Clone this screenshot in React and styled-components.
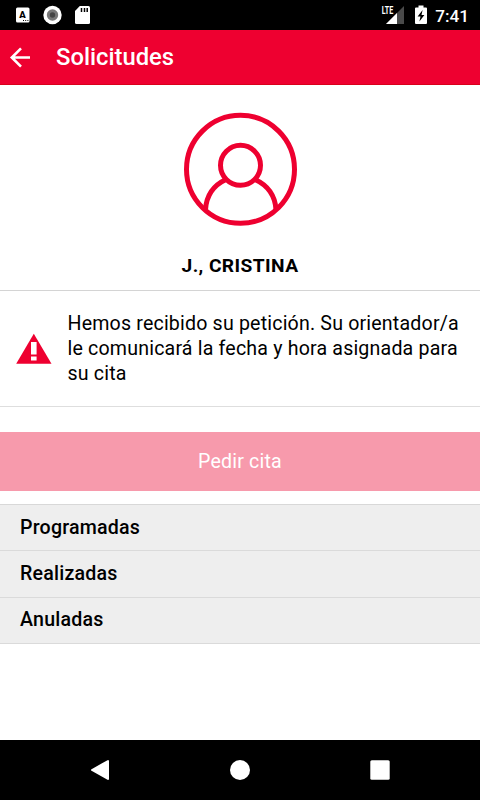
import React from 'react';
import styled, { createGlobalStyle } from 'styled-components';

const GlobalStyle = createGlobalStyle`
* {
    box-sizing: border-box;
}

body {
    margin: 0;
    background-color: #fff;
    font-family: Roboto, sans-serif;
    color: #000;
}
`;

const Screen = styled.div`
width: 480px;
height: 800px;
display: flex;
flex-direction: column;
overflow: hidden;
background-color: #fff;
`;

const StatusBar = styled.div`
height: 30px;
flex: none;
padding: 0 11px 0 15px;
display: flex;
align-items: center;
justify-content: space-between;
background-color: #000;
`;

const StatusGroup = styled.div`
display: flex;
align-items: center;
gap: ${props => props.$gap};
`;

const Clock = styled.span`
color: #fff;
font-size: 17.2px;
line-height: 20px;
font-weight: 500;
padding-top: 2px;
margin-left: -1.5px;
`;

const Icon = styled.svg`
display: block;
flex: none;
`;

const Header = styled.header`
height: 55px;
flex: none;
padding-left: 9px;
display: flex;
align-items: center;
gap: 26px;
background-color: #ee0030;
border-bottom: 1px solid #d9001b;
`;

const Title = styled.h1`
margin: 0;
color: #fff;
font-size: 23.8px;
line-height: 28px;
font-weight: 500;
`;

const Profile = styled.section`
height: 206px;
flex: none;
padding-top: 27px;
display: flex;
flex-direction: column;
align-items: center;
border-bottom: 1px solid #d4d4d4;
`;

const UserName = styled.h2`
margin: 27px 0 0;
font-size: 19.2px;
line-height: 24px;
font-weight: 700;
letter-spacing: 0.4px;
`;

const Notice = styled.section`
height: 116px;
flex: none;
padding: 20px 16px;
display: flex;
align-items: flex-start;
gap: 15.5px;
border-bottom: 1px solid #dedede;
`;

const WarningIcon = styled(Icon)`
margin-top: 22px;
`;

const NoticeText = styled.p`
margin: 0;
font-size: 19.6px;
line-height: 25px;
letter-spacing: 0.18px;
white-space: nowrap;
`;

const RequestButton = styled.button`
height: 59px;
flex: none;
margin: 25px 0 13px;
padding: 0;
border: 0;
background-color: #f79aac;
color: #fff;
font-family: inherit;
font-size: 19.6px;
letter-spacing: 0.18px;
`;

const List = styled.ul`
list-style: none;
margin: 0;
padding: 0;
border-top: 1px solid #d8d8d8;
`;

const ListItem = styled.li`
height: 46.33px;
padding: 0 20px 1px;
display: flex;
align-items: center;
background-color: #eee;
border-bottom: 1px solid #dadada;
font-size: 19.6px;
font-weight: 500;
letter-spacing: 0.2px;
`;

const NavBar = styled.nav`
height: 60px;
flex: none;
margin-top: auto;
padding: 0 90px;
display: flex;
align-items: center;
justify-content: space-between;
background-color: #000;
`;

const sections = ['Programadas', 'Realizadas', 'Anuladas'];

function StatusIcons() {
    return (
        <StatusGroup $gap="12px">
            <Icon width="15" height="20" viewBox="0 0 15 20">
                <rect x="1" y="2.6" width="13.5" height="15" rx="1.5" fill="#fff" />
                <text x="7.5" y="13.2" fontSize="9.5" fontWeight="900" fontFamily="Roboto, sans-serif" textAnchor="middle" fill="#000">A</text>
                <path d="M8 15.5h1M10.2 15.5h1M12.4 15.5h1" stroke="#000" strokeWidth="1" />
            </Icon>
            <Icon width="20" height="20" viewBox="0 0 20 20">
                <circle cx="10.5" cy="10" r="9.2" fill="#fff" />
                <circle cx="10.5" cy="10" r="5.7" fill="#777" />
                <circle cx="10.5" cy="10" r="2.7" fill="#444" />
            </Icon>
            <Icon width="17" height="20" viewBox="0 0 17 20">
                <path d="M5.8 1H14.5Q16 1 16 2.5V17.5Q16 19 14.5 19H2.5Q1 19 1 17.5V6Z" fill="#fff" />
                <path d="M7.5 3v4M10.5 3v4M13.2 3v4" stroke="#000" strokeWidth="1.5" />
            </Icon>
        </StatusGroup>
    );
}

function SystemIcons() {
    return (
        <StatusGroup $gap="10px">
            <Icon width="24" height="20" viewBox="0 0 24 20">
                <path d="M5 19L23 1V19Z" fill="#4a4a4a" />
                <path d="M5 19L16 8V19Z" fill="#fff" />
                <path d="M0 0H12.5V9.5H0Z" fill="#000" />
                <text x="0.8" y="9" fontSize="10.5" fontWeight="700" fontFamily="Roboto, sans-serif" textLength="11.5" lengthAdjust="spacingAndGlyphs" fill="#fff">LTE</text>
            </Icon>
            <Icon width="12" height="20" viewBox="0 0 12 20">
                <path d="M3.5 0.5h5v2H11q1 0 1 1V18q0 1-1 1H1q-1 0-1-1V3.500q0-1 1-1h2.500z" fill="#fff" />
                <path d="M7.600 5L2.600 11.500H5.500L4.400 16.500L9.400 10H6.500Z" fill="#000" />
            </Icon>
            <Clock>7:41</Clock>
        </StatusGroup>
    );
}

function App() {

    let listItems = sections.map((name) => <ListItem key={name}>{name}</ListItem>);

    return (
        <>
            <GlobalStyle />
            <Screen>
                <StatusBar>
                    <StatusIcons />
                    <SystemIcons />
                </StatusBar>
                <Header>
                    <Icon width="21" height="22" viewBox="0 0 21 22" fill="none" stroke="#fff" strokeWidth="2.6">
                        <path d="M21 11.500H3M12 2.300L2.800 11.500L12 20.700" />
                    </Icon>
                    <Title>Solicitudes</Title>
                </Header>
                <Profile>
                    <Icon width="114" height="115" viewBox="0 0 114 115" fill="none" stroke="#ee0030" strokeWidth="5">
                        <circle cx="57.5" cy="57.300" r="54" />
                        <circle cx="57.5" cy="53.300" r="20" />
                        <path d="M43 67.500C30 73.500 23.500 83 22.500 97.500M72 67.500C85 73.500 92 83 93 97.500" />
                    </Icon>
                    <UserName>J., CRISTINA</UserName>
                </Profile>
                <Notice>
                    <WarningIcon width="36" height="31" viewBox="0 0 36 31">
                        <path d="M17.800 0.800L35.500 30.700H0.200Z" fill="#ee0030" />
                        <path d="M15 9h5.600v12.500h-5.600zM15 23.500h5.600v4h-5.600z" fill="#fff" />
                    </WarningIcon>
                    <NoticeText>
                        Hemos recibido su petición. Su orientador/a<br />
                        le comunicará la fecha y hora asignada para<br />
                        su cita
                    </NoticeText>
                </Notice>
                <RequestButton>Pedir cita</RequestButton>
                <List>{listItems}</List>
                <NavBar>
                    <Icon width="20" height="22" viewBox="0 0 20 22">
                        <path d="M18 2V20L2 11Z" fill="#fff" stroke="#fff" strokeWidth="2" strokeLinejoin="round" />
                    </Icon>
                    <Icon width="20" height="20" viewBox="0 0 20 20">
                        <circle cx="10" cy="10" r="10" fill="#fff" />
                    </Icon>
                    <Icon width="20" height="20" viewBox="0 0 20 20">
                        <rect x="0.300" y="0.300" width="19.400" height="19.400" rx="1.500" fill="#fff" />
                    </Icon>
                </NavBar>
            </Screen>
        </>
    );
}

export default App;
